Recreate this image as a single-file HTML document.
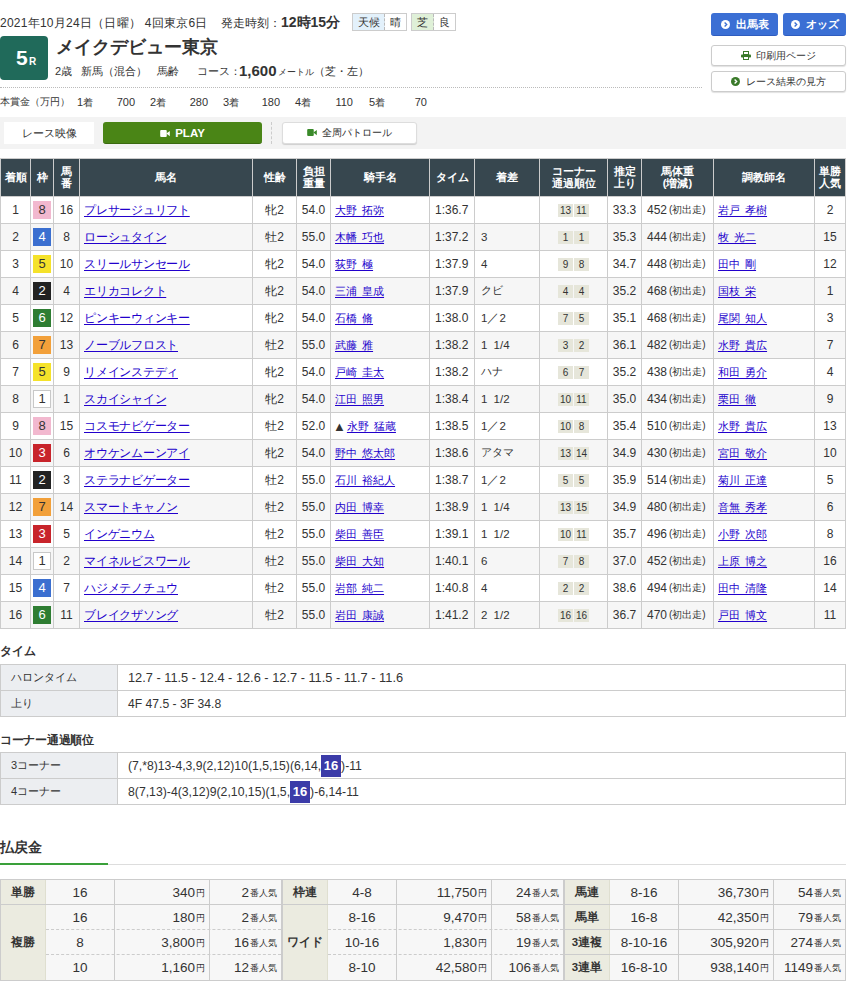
<!DOCTYPE html><html><head><meta charset="utf-8"><style>
*{box-sizing:border-box}
html,body{margin:0;padding:0;background:#fff;width:853px;height:993px;overflow:hidden}
body{font-family:"Liberation Sans",sans-serif;color:#333;position:relative}
.ab{position:absolute;white-space:nowrap}
.c{position:absolute;display:flex;align-items:center;white-space:nowrap;overflow:visible}
.hl{position:absolute;background:#ccc;height:1px}
.vl{position:absolute;background:#ccc;width:1px}
a{color:#2200cc;text-decoration:underline;text-underline-offset:2px}
</style></head><body>

<div class="ab" style="left:0;top:15px;font-size:12px;letter-spacing:0.25px;line-height:16px;color:#333">2021年10月24日（日曜） 4回東京6日</div>
<div class="ab" style="left:221px;top:13px;font-size:12px;line-height:18px;color:#333">発走時刻：<b style="font-size:14px">12時15分</b></div>
<div class="ab" style="left:352px;top:13px;width:55px;height:18px;border:1px solid #ccc;font-size:11px;line-height:16px"><span style="position:absolute;left:0;top:0;width:32px;height:16px;background:#e3f1fb;text-align:center;border-right:1px dashed #bbb">天候</span><span style="position:absolute;left:32px;top:0;width:21px;height:16px;text-align:center">晴</span></div>
<div class="ab" style="left:411px;top:13px;width:45px;height:18px;border:1px solid #ccc;font-size:11px;line-height:16px"><span style="position:absolute;left:0;top:0;width:22px;height:16px;background:#dff0d8;text-align:center;border-right:1px dashed #bbb">芝</span><span style="position:absolute;left:22px;top:0;width:21px;height:16px;text-align:center">良</span></div>
<div class="ab" style="left:0;top:36px;width:48px;height:44px;background:#206a5a;border-radius:4px;color:#fff"><span style="position:absolute;left:16px;top:11px;font-size:21px;line-height:22px;font-weight:bold">5</span><span style="position:absolute;left:29px;top:20px;font-size:10px;line-height:12px;font-weight:bold">R</span></div>
<div class="ab" style="left:56px;top:36px;font-size:18px;line-height:22px;font-weight:bold;color:#333">メイクデビュー東京</div>
<div class="ab" style="left:55px;top:63px;font-size:11px;line-height:16px;color:#333">2歳</div>
<div class="ab" style="left:81px;top:63px;font-size:11px;line-height:16px;color:#333">新馬（混合）</div>
<div class="ab" style="left:157px;top:63px;font-size:11px;line-height:16px;color:#333">馬齢</div>
<div class="ab" style="left:197px;top:63px;font-size:11px;line-height:16px;color:#333">コース：</div>
<div class="ab" style="left:239px;top:62px;font-size:15px;line-height:18px;font-weight:bold;color:#333">1,600</div>
<div class="ab" style="left:278px;top:64px;font-size:9px;line-height:16px;color:#333">メートル</div>
<div class="ab" style="left:314px;top:63px;font-size:11px;line-height:16px;color:#333">（芝・左）</div>
<div class="ab" style="left:0;top:87px;width:702px;height:1px;border-top:1px dotted #bbb"></div>
<div class="ab" style="left:711px;top:13px;width:67px;height:23px;background:#3b6fd4;border-bottom:1px solid #2f5cbf;border-radius:3px;color:#fff;font-size:11px;font-weight:bold;line-height:22px;text-align:center"><svg width="9" height="9" viewBox="0 0 12 12" style="vertical-align:-1px;margin-right:6px"><circle cx="6" cy="6" r="6" fill="#fff"/><path d="M4.8 3.2 L7.6 6 L4.8 8.8" stroke="#3b6fd4" stroke-width="1.8" fill="none"/></svg>出馬表</div>
<div class="ab" style="left:783px;top:13px;width:63px;height:23px;background:#3b6fd4;border-bottom:1px solid #2f5cbf;border-radius:3px;color:#fff;font-size:11px;font-weight:bold;line-height:22px;text-align:center"><svg width="9" height="9" viewBox="0 0 12 12" style="vertical-align:-1px;margin-right:6px"><circle cx="6" cy="6" r="6" fill="#fff"/><path d="M4.8 3.2 L7.6 6 L4.8 8.8" stroke="#3b6fd4" stroke-width="1.8" fill="none"/></svg>オッズ</div>
<div class="ab" style="left:711px;top:45px;width:135px;height:21px;background:#fff;border:1px solid #ccc;border-radius:3px;box-shadow:0 1px 1px rgba(0,0,0,.12);color:#333;font-size:10px;line-height:19px;text-align:center"><svg width="10" height="9" viewBox="0 0 10 9" style="vertical-align:-1px;margin-right:5px"><rect x="2.5" y="0.5" width="5" height="3" fill="none" stroke="#3a7a2a" stroke-width="1"/><rect x="0" y="3.5" width="10" height="3" rx="0.8" fill="#3a7a2a"/><rect x="2.5" y="5.5" width="5" height="3" fill="#fff" stroke="#3a7a2a" stroke-width="1"/></svg>印刷用ページ</div>
<div class="ab" style="left:711px;top:71px;width:135px;height:21px;background:#fff;border:1px solid #ccc;border-radius:3px;box-shadow:0 1px 1px rgba(0,0,0,.12);color:#333;font-size:10px;line-height:19px;text-align:center"><svg width="9" height="9" viewBox="0 0 12 12" style="vertical-align:-1px;margin-right:6px"><circle cx="6" cy="6" r="6" fill="#3a7a2a"/><path d="M4.8 3.2 L7.6 6 L4.8 8.8" stroke="#fff" stroke-width="1.8" fill="none"/></svg>レース結果の見方</div>
<div class="ab" style="left:0;top:94px;font-size:10px;line-height:16px">本賞金（万円）</div>
<div class="ab" style="left:77px;top:94px;font-size:11px;line-height:16px">1<span style="font-size:10px">着</span></div>
<div class="ab" style="left:95px;top:94px;width:40px;text-align:right;font-size:11px;line-height:16px">700</div>
<div class="ab" style="left:150px;top:94px;font-size:11px;line-height:16px">2<span style="font-size:10px">着</span></div>
<div class="ab" style="left:168px;top:94px;width:40px;text-align:right;font-size:11px;line-height:16px">280</div>
<div class="ab" style="left:223px;top:94px;font-size:11px;line-height:16px">3<span style="font-size:10px">着</span></div>
<div class="ab" style="left:240px;top:94px;width:40px;text-align:right;font-size:11px;line-height:16px">180</div>
<div class="ab" style="left:295px;top:94px;font-size:11px;line-height:16px">4<span style="font-size:10px">着</span></div>
<div class="ab" style="left:313px;top:94px;width:40px;text-align:right;font-size:11px;line-height:16px">110</div>
<div class="ab" style="left:369px;top:94px;font-size:11px;line-height:16px">5<span style="font-size:10px">着</span></div>
<div class="ab" style="left:387px;top:94px;width:40px;text-align:right;font-size:11px;line-height:16px">70</div>
<div class="ab" style="left:0;top:117px;width:846px;height:32px;background:#f3f3f3"></div>
<div class="ab" style="left:4px;top:122px;width:90px;height:22px;background:#fff;font-size:11px;line-height:22px;text-align:center;color:#333">レース映像</div>
<div class="ab" style="left:103px;top:122px;width:159px;height:22px;background:#4a8516;border-radius:3px;border-bottom:1px solid #3a6a10;color:#fff;font-size:11.5px;font-weight:bold;line-height:21px;padding-top:1px;text-align:center"><svg width="10" height="7" viewBox="0 0 11 8" style="vertical-align:0px;margin-right:5px"><rect x="0" y="0" width="7.5" height="8" rx="1.2" fill="#fff"/><path d="M7 4 L11 1 L11 7 Z" fill="#fff"/></svg>PLAY</div>
<div class="ab" style="left:271px;top:122px;width:1px;height:22px;border-left:1px dashed #ccc"></div>
<div class="ab" style="left:282px;top:122px;width:135px;height:22px;background:#fff;border:1px solid #ddd;border-radius:3px;box-shadow:0 1px 1px rgba(0,0,0,.15);color:#333;font-size:10px;line-height:19px;text-align:center"><svg width="10" height="7" viewBox="0 0 11 8" style="vertical-align:0px;margin-right:5px"><rect x="0" y="0" width="7.5" height="8" rx="1.2" fill="#3a8a2a"/><path d="M7 4 L11 1 L11 7 Z" fill="#3a8a2a"/></svg>全周パトロール</div>
<div class="ab" style="left:0;top:158px;width:846px;height:38px;background:#37474f"></div>
<div class="ab" style="left:0;top:223px;width:846px;height:27px;background:#f6f6f6"></div>
<div class="ab" style="left:0;top:277px;width:846px;height:27px;background:#f6f6f6"></div>
<div class="ab" style="left:0;top:331px;width:846px;height:27px;background:#f6f6f6"></div>
<div class="ab" style="left:0;top:385px;width:846px;height:27px;background:#f6f6f6"></div>
<div class="ab" style="left:0;top:439px;width:846px;height:27px;background:#f6f6f6"></div>
<div class="ab" style="left:0;top:493px;width:846px;height:27px;background:#f6f6f6"></div>
<div class="ab" style="left:0;top:547px;width:846px;height:27px;background:#f6f6f6"></div>
<div class="ab" style="left:0;top:601px;width:846px;height:27px;background:#f6f6f6"></div>
<div class="hl" style="left:0;top:158px;width:846px"></div>
<div class="hl" style="left:0;top:196px;width:846px"></div>
<div class="hl" style="left:0;top:223px;width:846px"></div>
<div class="hl" style="left:0;top:250px;width:846px"></div>
<div class="hl" style="left:0;top:277px;width:846px"></div>
<div class="hl" style="left:0;top:304px;width:846px"></div>
<div class="hl" style="left:0;top:331px;width:846px"></div>
<div class="hl" style="left:0;top:358px;width:846px"></div>
<div class="hl" style="left:0;top:385px;width:846px"></div>
<div class="hl" style="left:0;top:412px;width:846px"></div>
<div class="hl" style="left:0;top:439px;width:846px"></div>
<div class="hl" style="left:0;top:466px;width:846px"></div>
<div class="hl" style="left:0;top:493px;width:846px"></div>
<div class="hl" style="left:0;top:520px;width:846px"></div>
<div class="hl" style="left:0;top:547px;width:846px"></div>
<div class="hl" style="left:0;top:574px;width:846px"></div>
<div class="hl" style="left:0;top:601px;width:846px"></div>
<div class="hl" style="left:0;top:628px;width:846px"></div>
<div class="vl" style="left:0px;top:158px;height:471px"></div>
<div class="vl" style="left:30px;top:158px;height:471px"></div>
<div class="vl" style="left:53px;top:158px;height:471px"></div>
<div class="vl" style="left:79px;top:158px;height:471px"></div>
<div class="vl" style="left:252px;top:158px;height:471px"></div>
<div class="vl" style="left:296px;top:158px;height:471px"></div>
<div class="vl" style="left:330px;top:158px;height:471px"></div>
<div class="vl" style="left:429px;top:158px;height:471px"></div>
<div class="vl" style="left:474px;top:158px;height:471px"></div>
<div class="vl" style="left:539px;top:158px;height:471px"></div>
<div class="vl" style="left:607px;top:158px;height:471px"></div>
<div class="vl" style="left:641px;top:158px;height:471px"></div>
<div class="vl" style="left:713px;top:158px;height:471px"></div>
<div class="vl" style="left:814px;top:158px;height:471px"></div>
<div class="vl" style="left:845px;top:158px;height:471px"></div>
<div class="c" style="left:1px;top:159px;width:29px;height:37px;justify-content:center;text-align:center;color:#fff;font-weight:bold;font-size:11px;line-height:12px;padding-bottom:2px">着順</div>
<div class="c" style="left:31px;top:159px;width:22px;height:37px;justify-content:center;text-align:center;color:#fff;font-weight:bold;font-size:11px;line-height:12px;padding-bottom:2px">枠</div>
<div class="c" style="left:54px;top:159px;width:25px;height:37px;justify-content:center;text-align:center;color:#fff;font-weight:bold;font-size:11px;line-height:12px;padding-bottom:2px">馬<br>番</div>
<div class="c" style="left:80px;top:159px;width:172px;height:37px;justify-content:center;text-align:center;color:#fff;font-weight:bold;font-size:11px;line-height:12px;padding-bottom:2px">馬名</div>
<div class="c" style="left:253px;top:159px;width:43px;height:37px;justify-content:center;text-align:center;color:#fff;font-weight:bold;font-size:11px;line-height:12px;padding-bottom:2px">性齢</div>
<div class="c" style="left:297px;top:159px;width:33px;height:37px;justify-content:center;text-align:center;color:#fff;font-weight:bold;font-size:11px;line-height:12px;padding-bottom:2px">負担<br>重量</div>
<div class="c" style="left:331px;top:159px;width:98px;height:37px;justify-content:center;text-align:center;color:#fff;font-weight:bold;font-size:11px;line-height:12px;padding-bottom:2px">騎手名</div>
<div class="c" style="left:430px;top:159px;width:44px;height:37px;justify-content:center;text-align:center;color:#fff;font-weight:bold;font-size:11px;line-height:12px;padding-bottom:2px">タイム</div>
<div class="c" style="left:475px;top:159px;width:64px;height:37px;justify-content:center;text-align:center;color:#fff;font-weight:bold;font-size:11px;line-height:12px;padding-bottom:2px">着差</div>
<div class="c" style="left:540px;top:159px;width:67px;height:37px;justify-content:center;text-align:center;color:#fff;font-weight:bold;font-size:11px;line-height:12px;padding-bottom:2px">コーナー<br>通過順位</div>
<div class="c" style="left:608px;top:159px;width:33px;height:37px;justify-content:center;text-align:center;color:#fff;font-weight:bold;font-size:11px;line-height:12px;padding-bottom:2px">推定<br>上り</div>
<div class="c" style="left:642px;top:159px;width:71px;height:37px;justify-content:center;text-align:center;color:#fff;font-weight:bold;font-size:11px;line-height:12px;padding-bottom:2px">馬体重<br>(増減)</div>
<div class="c" style="left:714px;top:159px;width:100px;height:37px;justify-content:center;text-align:center;color:#fff;font-weight:bold;font-size:11px;line-height:12px;padding-bottom:2px">調教師名</div>
<div class="c" style="left:815px;top:159px;width:30px;height:37px;justify-content:center;text-align:center;color:#fff;font-weight:bold;font-size:11px;line-height:12px;padding-bottom:2px">単勝<br>人気</div>
<div class="c" style="left:1px;top:197px;width:29px;height:26px;justify-content:center;padding:0 0px;font-size:12px;">1</div>
<div class="c" style="left:31px;top:197px;width:22px;height:26px;justify-content:center;padding:0 0px;font-size:12px;"><span style="display:block;width:18px;height:18px;background:#f2b8cf;color:#333;text-align:center;line-height:18px;font-size:13px">8</span></div>
<div class="c" style="left:54px;top:197px;width:25px;height:26px;justify-content:center;padding:0 0px;font-size:12px;">16</div>
<div class="c" style="left:80px;top:197px;width:172px;height:26px;justify-content:flex-start;padding:0 4px;font-size:12px;font-size:12px;letter-spacing:-0.25px"><a>プレサージュリフト</a></div>
<div class="c" style="left:253px;top:197px;width:43px;height:26px;justify-content:center;padding:0 0px;font-size:12px;">牝2</div>
<div class="c" style="left:297px;top:197px;width:33px;height:26px;justify-content:center;padding:0 0px;font-size:12px;">54.0</div>
<div class="c" style="left:331px;top:197px;width:98px;height:26px;justify-content:flex-start;padding:0 4px;font-size:12px;font-size:11px;word-spacing:2px"><a>大野 拓弥</a></div>
<div class="c" style="left:430px;top:197px;width:44px;height:26px;justify-content:flex-start;padding:0 5px;font-size:12px;">1:36.7</div>
<div class="c" style="left:475px;top:197px;width:64px;height:26px;justify-content:flex-start;padding:0 6px;font-size:12px;font-size:10.5px"></div>
<div class="c" style="left:540px;top:197px;width:67px;height:26px;justify-content:center;padding:0 0px;font-size:12px;"><span style="display:inline-block;width:15px;height:13px;background:#e6e6da;font-size:10px;line-height:13px;text-align:center;margin:0 .5px">13</span><span style="display:inline-block;width:15px;height:13px;background:#e6e6da;font-size:10px;line-height:13px;text-align:center;margin:0 .5px">11</span></div>
<div class="c" style="left:608px;top:197px;width:33px;height:26px;justify-content:center;padding:0 0px;font-size:12px;">33.3</div>
<div class="c" style="left:642px;top:197px;width:71px;height:26px;justify-content:flex-start;padding:0 5px;font-size:12px;">452<span style="font-size:10px;margin-left:2px">(初出走)</span></div>
<div class="c" style="left:714px;top:197px;width:100px;height:26px;justify-content:flex-start;padding:0 4px;font-size:12px;font-size:11px;word-spacing:2px"><a>岩戸 孝樹</a></div>
<div class="c" style="left:815px;top:197px;width:30px;height:26px;justify-content:center;padding:0 0px;font-size:12px;">2</div>
<div class="c" style="left:1px;top:224px;width:29px;height:26px;justify-content:center;padding:0 0px;font-size:12px;">2</div>
<div class="c" style="left:31px;top:224px;width:22px;height:26px;justify-content:center;padding:0 0px;font-size:12px;"><span style="display:block;width:18px;height:18px;background:#3b6fd0;color:#fff;text-align:center;line-height:18px;font-size:13px">4</span></div>
<div class="c" style="left:54px;top:224px;width:25px;height:26px;justify-content:center;padding:0 0px;font-size:12px;">8</div>
<div class="c" style="left:80px;top:224px;width:172px;height:26px;justify-content:flex-start;padding:0 4px;font-size:12px;font-size:12px;letter-spacing:-0.25px"><a>ローシュタイン</a></div>
<div class="c" style="left:253px;top:224px;width:43px;height:26px;justify-content:center;padding:0 0px;font-size:12px;">牡2</div>
<div class="c" style="left:297px;top:224px;width:33px;height:26px;justify-content:center;padding:0 0px;font-size:12px;">55.0</div>
<div class="c" style="left:331px;top:224px;width:98px;height:26px;justify-content:flex-start;padding:0 4px;font-size:12px;font-size:11px;word-spacing:2px"><a>木幡 巧也</a></div>
<div class="c" style="left:430px;top:224px;width:44px;height:26px;justify-content:flex-start;padding:0 5px;font-size:12px;">1:37.2</div>
<div class="c" style="left:475px;top:224px;width:64px;height:26px;justify-content:flex-start;padding:0 6px;font-size:12px;font-size:11.5px;word-spacing:3px">3</div>
<div class="c" style="left:540px;top:224px;width:67px;height:26px;justify-content:center;padding:0 0px;font-size:12px;"><span style="display:inline-block;width:15px;height:13px;background:#e6e6da;font-size:10px;line-height:13px;text-align:center;margin:0 .5px">1</span><span style="display:inline-block;width:15px;height:13px;background:#e6e6da;font-size:10px;line-height:13px;text-align:center;margin:0 .5px">1</span></div>
<div class="c" style="left:608px;top:224px;width:33px;height:26px;justify-content:center;padding:0 0px;font-size:12px;">35.3</div>
<div class="c" style="left:642px;top:224px;width:71px;height:26px;justify-content:flex-start;padding:0 5px;font-size:12px;">444<span style="font-size:10px;margin-left:2px">(初出走)</span></div>
<div class="c" style="left:714px;top:224px;width:100px;height:26px;justify-content:flex-start;padding:0 4px;font-size:12px;font-size:11px;word-spacing:2px"><a>牧 光二</a></div>
<div class="c" style="left:815px;top:224px;width:30px;height:26px;justify-content:center;padding:0 0px;font-size:12px;">15</div>
<div class="c" style="left:1px;top:251px;width:29px;height:26px;justify-content:center;padding:0 0px;font-size:12px;">3</div>
<div class="c" style="left:31px;top:251px;width:22px;height:26px;justify-content:center;padding:0 0px;font-size:12px;"><span style="display:block;width:18px;height:18px;background:#f5e22a;color:#333;text-align:center;line-height:18px;font-size:13px">5</span></div>
<div class="c" style="left:54px;top:251px;width:25px;height:26px;justify-content:center;padding:0 0px;font-size:12px;">10</div>
<div class="c" style="left:80px;top:251px;width:172px;height:26px;justify-content:flex-start;padding:0 4px;font-size:12px;font-size:12px;letter-spacing:-0.25px"><a>スリールサンセール</a></div>
<div class="c" style="left:253px;top:251px;width:43px;height:26px;justify-content:center;padding:0 0px;font-size:12px;">牝2</div>
<div class="c" style="left:297px;top:251px;width:33px;height:26px;justify-content:center;padding:0 0px;font-size:12px;">54.0</div>
<div class="c" style="left:331px;top:251px;width:98px;height:26px;justify-content:flex-start;padding:0 4px;font-size:12px;font-size:11px;word-spacing:2px"><a>荻野 極</a></div>
<div class="c" style="left:430px;top:251px;width:44px;height:26px;justify-content:flex-start;padding:0 5px;font-size:12px;">1:37.9</div>
<div class="c" style="left:475px;top:251px;width:64px;height:26px;justify-content:flex-start;padding:0 6px;font-size:12px;font-size:11.5px;word-spacing:3px">4</div>
<div class="c" style="left:540px;top:251px;width:67px;height:26px;justify-content:center;padding:0 0px;font-size:12px;"><span style="display:inline-block;width:15px;height:13px;background:#e6e6da;font-size:10px;line-height:13px;text-align:center;margin:0 .5px">9</span><span style="display:inline-block;width:15px;height:13px;background:#e6e6da;font-size:10px;line-height:13px;text-align:center;margin:0 .5px">8</span></div>
<div class="c" style="left:608px;top:251px;width:33px;height:26px;justify-content:center;padding:0 0px;font-size:12px;">34.7</div>
<div class="c" style="left:642px;top:251px;width:71px;height:26px;justify-content:flex-start;padding:0 5px;font-size:12px;">448<span style="font-size:10px;margin-left:2px">(初出走)</span></div>
<div class="c" style="left:714px;top:251px;width:100px;height:26px;justify-content:flex-start;padding:0 4px;font-size:12px;font-size:11px;word-spacing:2px"><a>田中 剛</a></div>
<div class="c" style="left:815px;top:251px;width:30px;height:26px;justify-content:center;padding:0 0px;font-size:12px;">12</div>
<div class="c" style="left:1px;top:278px;width:29px;height:26px;justify-content:center;padding:0 0px;font-size:12px;">4</div>
<div class="c" style="left:31px;top:278px;width:22px;height:26px;justify-content:center;padding:0 0px;font-size:12px;"><span style="display:block;width:18px;height:18px;background:#222;color:#fff;text-align:center;line-height:18px;font-size:13px">2</span></div>
<div class="c" style="left:54px;top:278px;width:25px;height:26px;justify-content:center;padding:0 0px;font-size:12px;">4</div>
<div class="c" style="left:80px;top:278px;width:172px;height:26px;justify-content:flex-start;padding:0 4px;font-size:12px;font-size:12px;letter-spacing:-0.25px"><a>エリカコレクト</a></div>
<div class="c" style="left:253px;top:278px;width:43px;height:26px;justify-content:center;padding:0 0px;font-size:12px;">牝2</div>
<div class="c" style="left:297px;top:278px;width:33px;height:26px;justify-content:center;padding:0 0px;font-size:12px;">54.0</div>
<div class="c" style="left:331px;top:278px;width:98px;height:26px;justify-content:flex-start;padding:0 4px;font-size:12px;font-size:11px;word-spacing:2px"><a>三浦 皇成</a></div>
<div class="c" style="left:430px;top:278px;width:44px;height:26px;justify-content:flex-start;padding:0 5px;font-size:12px;">1:37.9</div>
<div class="c" style="left:475px;top:278px;width:64px;height:26px;justify-content:flex-start;padding:0 6px;font-size:12px;font-size:10.5px">クビ</div>
<div class="c" style="left:540px;top:278px;width:67px;height:26px;justify-content:center;padding:0 0px;font-size:12px;"><span style="display:inline-block;width:15px;height:13px;background:#e6e6da;font-size:10px;line-height:13px;text-align:center;margin:0 .5px">4</span><span style="display:inline-block;width:15px;height:13px;background:#e6e6da;font-size:10px;line-height:13px;text-align:center;margin:0 .5px">4</span></div>
<div class="c" style="left:608px;top:278px;width:33px;height:26px;justify-content:center;padding:0 0px;font-size:12px;">35.2</div>
<div class="c" style="left:642px;top:278px;width:71px;height:26px;justify-content:flex-start;padding:0 5px;font-size:12px;">468<span style="font-size:10px;margin-left:2px">(初出走)</span></div>
<div class="c" style="left:714px;top:278px;width:100px;height:26px;justify-content:flex-start;padding:0 4px;font-size:12px;font-size:11px;word-spacing:2px"><a>国枝 栄</a></div>
<div class="c" style="left:815px;top:278px;width:30px;height:26px;justify-content:center;padding:0 0px;font-size:12px;">1</div>
<div class="c" style="left:1px;top:305px;width:29px;height:26px;justify-content:center;padding:0 0px;font-size:12px;">5</div>
<div class="c" style="left:31px;top:305px;width:22px;height:26px;justify-content:center;padding:0 0px;font-size:12px;"><span style="display:block;width:18px;height:18px;background:#2e7d32;color:#fff;text-align:center;line-height:18px;font-size:13px">6</span></div>
<div class="c" style="left:54px;top:305px;width:25px;height:26px;justify-content:center;padding:0 0px;font-size:12px;">12</div>
<div class="c" style="left:80px;top:305px;width:172px;height:26px;justify-content:flex-start;padding:0 4px;font-size:12px;font-size:12px;letter-spacing:-0.25px"><a>ピンキーウィンキー</a></div>
<div class="c" style="left:253px;top:305px;width:43px;height:26px;justify-content:center;padding:0 0px;font-size:12px;">牝2</div>
<div class="c" style="left:297px;top:305px;width:33px;height:26px;justify-content:center;padding:0 0px;font-size:12px;">54.0</div>
<div class="c" style="left:331px;top:305px;width:98px;height:26px;justify-content:flex-start;padding:0 4px;font-size:12px;font-size:11px;word-spacing:2px"><a>石橋 脩</a></div>
<div class="c" style="left:430px;top:305px;width:44px;height:26px;justify-content:flex-start;padding:0 5px;font-size:12px;">1:38.0</div>
<div class="c" style="left:475px;top:305px;width:64px;height:26px;justify-content:flex-start;padding:0 6px;font-size:12px;font-size:11.5px;word-spacing:3px">1<span style="font-size:12px">／</span>2</div>
<div class="c" style="left:540px;top:305px;width:67px;height:26px;justify-content:center;padding:0 0px;font-size:12px;"><span style="display:inline-block;width:15px;height:13px;background:#e6e6da;font-size:10px;line-height:13px;text-align:center;margin:0 .5px">7</span><span style="display:inline-block;width:15px;height:13px;background:#e6e6da;font-size:10px;line-height:13px;text-align:center;margin:0 .5px">5</span></div>
<div class="c" style="left:608px;top:305px;width:33px;height:26px;justify-content:center;padding:0 0px;font-size:12px;">35.1</div>
<div class="c" style="left:642px;top:305px;width:71px;height:26px;justify-content:flex-start;padding:0 5px;font-size:12px;">468<span style="font-size:10px;margin-left:2px">(初出走)</span></div>
<div class="c" style="left:714px;top:305px;width:100px;height:26px;justify-content:flex-start;padding:0 4px;font-size:12px;font-size:11px;word-spacing:2px"><a>尾関 知人</a></div>
<div class="c" style="left:815px;top:305px;width:30px;height:26px;justify-content:center;padding:0 0px;font-size:12px;">3</div>
<div class="c" style="left:1px;top:332px;width:29px;height:26px;justify-content:center;padding:0 0px;font-size:12px;">6</div>
<div class="c" style="left:31px;top:332px;width:22px;height:26px;justify-content:center;padding:0 0px;font-size:12px;"><span style="display:block;width:18px;height:18px;background:#f2a03a;color:#333;text-align:center;line-height:18px;font-size:13px">7</span></div>
<div class="c" style="left:54px;top:332px;width:25px;height:26px;justify-content:center;padding:0 0px;font-size:12px;">13</div>
<div class="c" style="left:80px;top:332px;width:172px;height:26px;justify-content:flex-start;padding:0 4px;font-size:12px;font-size:12px;letter-spacing:-0.25px"><a>ノーブルフロスト</a></div>
<div class="c" style="left:253px;top:332px;width:43px;height:26px;justify-content:center;padding:0 0px;font-size:12px;">牡2</div>
<div class="c" style="left:297px;top:332px;width:33px;height:26px;justify-content:center;padding:0 0px;font-size:12px;">55.0</div>
<div class="c" style="left:331px;top:332px;width:98px;height:26px;justify-content:flex-start;padding:0 4px;font-size:12px;font-size:11px;word-spacing:2px"><a>武藤 雅</a></div>
<div class="c" style="left:430px;top:332px;width:44px;height:26px;justify-content:flex-start;padding:0 5px;font-size:12px;">1:38.2</div>
<div class="c" style="left:475px;top:332px;width:64px;height:26px;justify-content:flex-start;padding:0 6px;font-size:12px;font-size:11.5px;word-spacing:3px">1 1/4</div>
<div class="c" style="left:540px;top:332px;width:67px;height:26px;justify-content:center;padding:0 0px;font-size:12px;"><span style="display:inline-block;width:15px;height:13px;background:#e6e6da;font-size:10px;line-height:13px;text-align:center;margin:0 .5px">3</span><span style="display:inline-block;width:15px;height:13px;background:#e6e6da;font-size:10px;line-height:13px;text-align:center;margin:0 .5px">2</span></div>
<div class="c" style="left:608px;top:332px;width:33px;height:26px;justify-content:center;padding:0 0px;font-size:12px;">36.1</div>
<div class="c" style="left:642px;top:332px;width:71px;height:26px;justify-content:flex-start;padding:0 5px;font-size:12px;">482<span style="font-size:10px;margin-left:2px">(初出走)</span></div>
<div class="c" style="left:714px;top:332px;width:100px;height:26px;justify-content:flex-start;padding:0 4px;font-size:12px;font-size:11px;word-spacing:2px"><a>水野 貴広</a></div>
<div class="c" style="left:815px;top:332px;width:30px;height:26px;justify-content:center;padding:0 0px;font-size:12px;">7</div>
<div class="c" style="left:1px;top:359px;width:29px;height:26px;justify-content:center;padding:0 0px;font-size:12px;">7</div>
<div class="c" style="left:31px;top:359px;width:22px;height:26px;justify-content:center;padding:0 0px;font-size:12px;"><span style="display:block;width:18px;height:18px;background:#f5e22a;color:#333;text-align:center;line-height:18px;font-size:13px">5</span></div>
<div class="c" style="left:54px;top:359px;width:25px;height:26px;justify-content:center;padding:0 0px;font-size:12px;">9</div>
<div class="c" style="left:80px;top:359px;width:172px;height:26px;justify-content:flex-start;padding:0 4px;font-size:12px;font-size:12px;letter-spacing:-0.25px"><a>リメインステディ</a></div>
<div class="c" style="left:253px;top:359px;width:43px;height:26px;justify-content:center;padding:0 0px;font-size:12px;">牝2</div>
<div class="c" style="left:297px;top:359px;width:33px;height:26px;justify-content:center;padding:0 0px;font-size:12px;">54.0</div>
<div class="c" style="left:331px;top:359px;width:98px;height:26px;justify-content:flex-start;padding:0 4px;font-size:12px;font-size:11px;word-spacing:2px"><a>戸崎 圭太</a></div>
<div class="c" style="left:430px;top:359px;width:44px;height:26px;justify-content:flex-start;padding:0 5px;font-size:12px;">1:38.2</div>
<div class="c" style="left:475px;top:359px;width:64px;height:26px;justify-content:flex-start;padding:0 6px;font-size:12px;font-size:10.5px">ハナ</div>
<div class="c" style="left:540px;top:359px;width:67px;height:26px;justify-content:center;padding:0 0px;font-size:12px;"><span style="display:inline-block;width:15px;height:13px;background:#e6e6da;font-size:10px;line-height:13px;text-align:center;margin:0 .5px">6</span><span style="display:inline-block;width:15px;height:13px;background:#e6e6da;font-size:10px;line-height:13px;text-align:center;margin:0 .5px">7</span></div>
<div class="c" style="left:608px;top:359px;width:33px;height:26px;justify-content:center;padding:0 0px;font-size:12px;">35.2</div>
<div class="c" style="left:642px;top:359px;width:71px;height:26px;justify-content:flex-start;padding:0 5px;font-size:12px;">438<span style="font-size:10px;margin-left:2px">(初出走)</span></div>
<div class="c" style="left:714px;top:359px;width:100px;height:26px;justify-content:flex-start;padding:0 4px;font-size:12px;font-size:11px;word-spacing:2px"><a>和田 勇介</a></div>
<div class="c" style="left:815px;top:359px;width:30px;height:26px;justify-content:center;padding:0 0px;font-size:12px;">4</div>
<div class="c" style="left:1px;top:386px;width:29px;height:26px;justify-content:center;padding:0 0px;font-size:12px;">8</div>
<div class="c" style="left:31px;top:386px;width:22px;height:26px;justify-content:center;padding:0 0px;font-size:12px;"><span style="display:block;width:18px;height:18px;background:#fff;color:#333;border:1px solid #c8c8c8;text-align:center;line-height:16px;font-size:13px">1</span></div>
<div class="c" style="left:54px;top:386px;width:25px;height:26px;justify-content:center;padding:0 0px;font-size:12px;">1</div>
<div class="c" style="left:80px;top:386px;width:172px;height:26px;justify-content:flex-start;padding:0 4px;font-size:12px;font-size:12px;letter-spacing:-0.25px"><a>スカイシャイン</a></div>
<div class="c" style="left:253px;top:386px;width:43px;height:26px;justify-content:center;padding:0 0px;font-size:12px;">牝2</div>
<div class="c" style="left:297px;top:386px;width:33px;height:26px;justify-content:center;padding:0 0px;font-size:12px;">54.0</div>
<div class="c" style="left:331px;top:386px;width:98px;height:26px;justify-content:flex-start;padding:0 4px;font-size:12px;font-size:11px;word-spacing:2px"><a>江田 照男</a></div>
<div class="c" style="left:430px;top:386px;width:44px;height:26px;justify-content:flex-start;padding:0 5px;font-size:12px;">1:38.4</div>
<div class="c" style="left:475px;top:386px;width:64px;height:26px;justify-content:flex-start;padding:0 6px;font-size:12px;font-size:11.5px;word-spacing:3px">1 1/2</div>
<div class="c" style="left:540px;top:386px;width:67px;height:26px;justify-content:center;padding:0 0px;font-size:12px;"><span style="display:inline-block;width:15px;height:13px;background:#e6e6da;font-size:10px;line-height:13px;text-align:center;margin:0 .5px">10</span><span style="display:inline-block;width:15px;height:13px;background:#e6e6da;font-size:10px;line-height:13px;text-align:center;margin:0 .5px">11</span></div>
<div class="c" style="left:608px;top:386px;width:33px;height:26px;justify-content:center;padding:0 0px;font-size:12px;">35.0</div>
<div class="c" style="left:642px;top:386px;width:71px;height:26px;justify-content:flex-start;padding:0 5px;font-size:12px;">434<span style="font-size:10px;margin-left:2px">(初出走)</span></div>
<div class="c" style="left:714px;top:386px;width:100px;height:26px;justify-content:flex-start;padding:0 4px;font-size:12px;font-size:11px;word-spacing:2px"><a>栗田 徹</a></div>
<div class="c" style="left:815px;top:386px;width:30px;height:26px;justify-content:center;padding:0 0px;font-size:12px;">9</div>
<div class="c" style="left:1px;top:413px;width:29px;height:26px;justify-content:center;padding:0 0px;font-size:12px;">9</div>
<div class="c" style="left:31px;top:413px;width:22px;height:26px;justify-content:center;padding:0 0px;font-size:12px;"><span style="display:block;width:18px;height:18px;background:#f2b8cf;color:#333;text-align:center;line-height:18px;font-size:13px">8</span></div>
<div class="c" style="left:54px;top:413px;width:25px;height:26px;justify-content:center;padding:0 0px;font-size:12px;">15</div>
<div class="c" style="left:80px;top:413px;width:172px;height:26px;justify-content:flex-start;padding:0 4px;font-size:12px;font-size:12px;letter-spacing:-0.25px"><a>コスモナビゲーター</a></div>
<div class="c" style="left:253px;top:413px;width:43px;height:26px;justify-content:center;padding:0 0px;font-size:12px;">牡2</div>
<div class="c" style="left:297px;top:413px;width:33px;height:26px;justify-content:center;padding:0 0px;font-size:12px;">52.0</div>
<div class="c" style="left:331px;top:413px;width:98px;height:26px;justify-content:flex-start;padding:0 4px;font-size:12px;font-size:11px;word-spacing:2px"><span style="font-size:13px;margin-left:-2px;margin-right:1px">▲</span><a>永野 猛蔵</a></div>
<div class="c" style="left:430px;top:413px;width:44px;height:26px;justify-content:flex-start;padding:0 5px;font-size:12px;">1:38.5</div>
<div class="c" style="left:475px;top:413px;width:64px;height:26px;justify-content:flex-start;padding:0 6px;font-size:12px;font-size:11.5px;word-spacing:3px">1<span style="font-size:12px">／</span>2</div>
<div class="c" style="left:540px;top:413px;width:67px;height:26px;justify-content:center;padding:0 0px;font-size:12px;"><span style="display:inline-block;width:15px;height:13px;background:#e6e6da;font-size:10px;line-height:13px;text-align:center;margin:0 .5px">10</span><span style="display:inline-block;width:15px;height:13px;background:#e6e6da;font-size:10px;line-height:13px;text-align:center;margin:0 .5px">8</span></div>
<div class="c" style="left:608px;top:413px;width:33px;height:26px;justify-content:center;padding:0 0px;font-size:12px;">35.4</div>
<div class="c" style="left:642px;top:413px;width:71px;height:26px;justify-content:flex-start;padding:0 5px;font-size:12px;">510<span style="font-size:10px;margin-left:2px">(初出走)</span></div>
<div class="c" style="left:714px;top:413px;width:100px;height:26px;justify-content:flex-start;padding:0 4px;font-size:12px;font-size:11px;word-spacing:2px"><a>水野 貴広</a></div>
<div class="c" style="left:815px;top:413px;width:30px;height:26px;justify-content:center;padding:0 0px;font-size:12px;">13</div>
<div class="c" style="left:1px;top:440px;width:29px;height:26px;justify-content:center;padding:0 0px;font-size:12px;">10</div>
<div class="c" style="left:31px;top:440px;width:22px;height:26px;justify-content:center;padding:0 0px;font-size:12px;"><span style="display:block;width:18px;height:18px;background:#c8242b;color:#fff;text-align:center;line-height:18px;font-size:13px">3</span></div>
<div class="c" style="left:54px;top:440px;width:25px;height:26px;justify-content:center;padding:0 0px;font-size:12px;">6</div>
<div class="c" style="left:80px;top:440px;width:172px;height:26px;justify-content:flex-start;padding:0 4px;font-size:12px;font-size:12px;letter-spacing:-0.25px"><a>オウケンムーンアイ</a></div>
<div class="c" style="left:253px;top:440px;width:43px;height:26px;justify-content:center;padding:0 0px;font-size:12px;">牝2</div>
<div class="c" style="left:297px;top:440px;width:33px;height:26px;justify-content:center;padding:0 0px;font-size:12px;">54.0</div>
<div class="c" style="left:331px;top:440px;width:98px;height:26px;justify-content:flex-start;padding:0 4px;font-size:12px;font-size:11px;word-spacing:2px"><a>野中 悠太郎</a></div>
<div class="c" style="left:430px;top:440px;width:44px;height:26px;justify-content:flex-start;padding:0 5px;font-size:12px;">1:38.6</div>
<div class="c" style="left:475px;top:440px;width:64px;height:26px;justify-content:flex-start;padding:0 6px;font-size:12px;font-size:10.5px">アタマ</div>
<div class="c" style="left:540px;top:440px;width:67px;height:26px;justify-content:center;padding:0 0px;font-size:12px;"><span style="display:inline-block;width:15px;height:13px;background:#e6e6da;font-size:10px;line-height:13px;text-align:center;margin:0 .5px">13</span><span style="display:inline-block;width:15px;height:13px;background:#e6e6da;font-size:10px;line-height:13px;text-align:center;margin:0 .5px">14</span></div>
<div class="c" style="left:608px;top:440px;width:33px;height:26px;justify-content:center;padding:0 0px;font-size:12px;">34.9</div>
<div class="c" style="left:642px;top:440px;width:71px;height:26px;justify-content:flex-start;padding:0 5px;font-size:12px;">430<span style="font-size:10px;margin-left:2px">(初出走)</span></div>
<div class="c" style="left:714px;top:440px;width:100px;height:26px;justify-content:flex-start;padding:0 4px;font-size:12px;font-size:11px;word-spacing:2px"><a>宮田 敬介</a></div>
<div class="c" style="left:815px;top:440px;width:30px;height:26px;justify-content:center;padding:0 0px;font-size:12px;">10</div>
<div class="c" style="left:1px;top:467px;width:29px;height:26px;justify-content:center;padding:0 0px;font-size:12px;">11</div>
<div class="c" style="left:31px;top:467px;width:22px;height:26px;justify-content:center;padding:0 0px;font-size:12px;"><span style="display:block;width:18px;height:18px;background:#222;color:#fff;text-align:center;line-height:18px;font-size:13px">2</span></div>
<div class="c" style="left:54px;top:467px;width:25px;height:26px;justify-content:center;padding:0 0px;font-size:12px;">3</div>
<div class="c" style="left:80px;top:467px;width:172px;height:26px;justify-content:flex-start;padding:0 4px;font-size:12px;font-size:12px;letter-spacing:-0.25px"><a>ステラナビゲーター</a></div>
<div class="c" style="left:253px;top:467px;width:43px;height:26px;justify-content:center;padding:0 0px;font-size:12px;">牡2</div>
<div class="c" style="left:297px;top:467px;width:33px;height:26px;justify-content:center;padding:0 0px;font-size:12px;">55.0</div>
<div class="c" style="left:331px;top:467px;width:98px;height:26px;justify-content:flex-start;padding:0 4px;font-size:12px;font-size:11px;word-spacing:2px"><a>石川 裕紀人</a></div>
<div class="c" style="left:430px;top:467px;width:44px;height:26px;justify-content:flex-start;padding:0 5px;font-size:12px;">1:38.7</div>
<div class="c" style="left:475px;top:467px;width:64px;height:26px;justify-content:flex-start;padding:0 6px;font-size:12px;font-size:11.5px;word-spacing:3px">1<span style="font-size:12px">／</span>2</div>
<div class="c" style="left:540px;top:467px;width:67px;height:26px;justify-content:center;padding:0 0px;font-size:12px;"><span style="display:inline-block;width:15px;height:13px;background:#e6e6da;font-size:10px;line-height:13px;text-align:center;margin:0 .5px">5</span><span style="display:inline-block;width:15px;height:13px;background:#e6e6da;font-size:10px;line-height:13px;text-align:center;margin:0 .5px">5</span></div>
<div class="c" style="left:608px;top:467px;width:33px;height:26px;justify-content:center;padding:0 0px;font-size:12px;">35.9</div>
<div class="c" style="left:642px;top:467px;width:71px;height:26px;justify-content:flex-start;padding:0 5px;font-size:12px;">514<span style="font-size:10px;margin-left:2px">(初出走)</span></div>
<div class="c" style="left:714px;top:467px;width:100px;height:26px;justify-content:flex-start;padding:0 4px;font-size:12px;font-size:11px;word-spacing:2px"><a>菊川 正達</a></div>
<div class="c" style="left:815px;top:467px;width:30px;height:26px;justify-content:center;padding:0 0px;font-size:12px;">5</div>
<div class="c" style="left:1px;top:494px;width:29px;height:26px;justify-content:center;padding:0 0px;font-size:12px;">12</div>
<div class="c" style="left:31px;top:494px;width:22px;height:26px;justify-content:center;padding:0 0px;font-size:12px;"><span style="display:block;width:18px;height:18px;background:#f2a03a;color:#333;text-align:center;line-height:18px;font-size:13px">7</span></div>
<div class="c" style="left:54px;top:494px;width:25px;height:26px;justify-content:center;padding:0 0px;font-size:12px;">14</div>
<div class="c" style="left:80px;top:494px;width:172px;height:26px;justify-content:flex-start;padding:0 4px;font-size:12px;font-size:12px;letter-spacing:-0.25px"><a>スマートキャノン</a></div>
<div class="c" style="left:253px;top:494px;width:43px;height:26px;justify-content:center;padding:0 0px;font-size:12px;">牡2</div>
<div class="c" style="left:297px;top:494px;width:33px;height:26px;justify-content:center;padding:0 0px;font-size:12px;">55.0</div>
<div class="c" style="left:331px;top:494px;width:98px;height:26px;justify-content:flex-start;padding:0 4px;font-size:12px;font-size:11px;word-spacing:2px"><a>内田 博幸</a></div>
<div class="c" style="left:430px;top:494px;width:44px;height:26px;justify-content:flex-start;padding:0 5px;font-size:12px;">1:38.9</div>
<div class="c" style="left:475px;top:494px;width:64px;height:26px;justify-content:flex-start;padding:0 6px;font-size:12px;font-size:11.5px;word-spacing:3px">1 1/4</div>
<div class="c" style="left:540px;top:494px;width:67px;height:26px;justify-content:center;padding:0 0px;font-size:12px;"><span style="display:inline-block;width:15px;height:13px;background:#e6e6da;font-size:10px;line-height:13px;text-align:center;margin:0 .5px">13</span><span style="display:inline-block;width:15px;height:13px;background:#e6e6da;font-size:10px;line-height:13px;text-align:center;margin:0 .5px">15</span></div>
<div class="c" style="left:608px;top:494px;width:33px;height:26px;justify-content:center;padding:0 0px;font-size:12px;">34.9</div>
<div class="c" style="left:642px;top:494px;width:71px;height:26px;justify-content:flex-start;padding:0 5px;font-size:12px;">480<span style="font-size:10px;margin-left:2px">(初出走)</span></div>
<div class="c" style="left:714px;top:494px;width:100px;height:26px;justify-content:flex-start;padding:0 4px;font-size:12px;font-size:11px;word-spacing:2px"><a>音無 秀孝</a></div>
<div class="c" style="left:815px;top:494px;width:30px;height:26px;justify-content:center;padding:0 0px;font-size:12px;">6</div>
<div class="c" style="left:1px;top:521px;width:29px;height:26px;justify-content:center;padding:0 0px;font-size:12px;">13</div>
<div class="c" style="left:31px;top:521px;width:22px;height:26px;justify-content:center;padding:0 0px;font-size:12px;"><span style="display:block;width:18px;height:18px;background:#c8242b;color:#fff;text-align:center;line-height:18px;font-size:13px">3</span></div>
<div class="c" style="left:54px;top:521px;width:25px;height:26px;justify-content:center;padding:0 0px;font-size:12px;">5</div>
<div class="c" style="left:80px;top:521px;width:172px;height:26px;justify-content:flex-start;padding:0 4px;font-size:12px;font-size:12px;letter-spacing:-0.25px"><a>インゲニウム</a></div>
<div class="c" style="left:253px;top:521px;width:43px;height:26px;justify-content:center;padding:0 0px;font-size:12px;">牡2</div>
<div class="c" style="left:297px;top:521px;width:33px;height:26px;justify-content:center;padding:0 0px;font-size:12px;">55.0</div>
<div class="c" style="left:331px;top:521px;width:98px;height:26px;justify-content:flex-start;padding:0 4px;font-size:12px;font-size:11px;word-spacing:2px"><a>柴田 善臣</a></div>
<div class="c" style="left:430px;top:521px;width:44px;height:26px;justify-content:flex-start;padding:0 5px;font-size:12px;">1:39.1</div>
<div class="c" style="left:475px;top:521px;width:64px;height:26px;justify-content:flex-start;padding:0 6px;font-size:12px;font-size:11.5px;word-spacing:3px">1 1/2</div>
<div class="c" style="left:540px;top:521px;width:67px;height:26px;justify-content:center;padding:0 0px;font-size:12px;"><span style="display:inline-block;width:15px;height:13px;background:#e6e6da;font-size:10px;line-height:13px;text-align:center;margin:0 .5px">10</span><span style="display:inline-block;width:15px;height:13px;background:#e6e6da;font-size:10px;line-height:13px;text-align:center;margin:0 .5px">11</span></div>
<div class="c" style="left:608px;top:521px;width:33px;height:26px;justify-content:center;padding:0 0px;font-size:12px;">35.7</div>
<div class="c" style="left:642px;top:521px;width:71px;height:26px;justify-content:flex-start;padding:0 5px;font-size:12px;">496<span style="font-size:10px;margin-left:2px">(初出走)</span></div>
<div class="c" style="left:714px;top:521px;width:100px;height:26px;justify-content:flex-start;padding:0 4px;font-size:12px;font-size:11px;word-spacing:2px"><a>小野 次郎</a></div>
<div class="c" style="left:815px;top:521px;width:30px;height:26px;justify-content:center;padding:0 0px;font-size:12px;">8</div>
<div class="c" style="left:1px;top:548px;width:29px;height:26px;justify-content:center;padding:0 0px;font-size:12px;">14</div>
<div class="c" style="left:31px;top:548px;width:22px;height:26px;justify-content:center;padding:0 0px;font-size:12px;"><span style="display:block;width:18px;height:18px;background:#fff;color:#333;border:1px solid #c8c8c8;text-align:center;line-height:16px;font-size:13px">1</span></div>
<div class="c" style="left:54px;top:548px;width:25px;height:26px;justify-content:center;padding:0 0px;font-size:12px;">2</div>
<div class="c" style="left:80px;top:548px;width:172px;height:26px;justify-content:flex-start;padding:0 4px;font-size:12px;font-size:12px;letter-spacing:-0.25px"><a>マイネルビスワール</a></div>
<div class="c" style="left:253px;top:548px;width:43px;height:26px;justify-content:center;padding:0 0px;font-size:12px;">牡2</div>
<div class="c" style="left:297px;top:548px;width:33px;height:26px;justify-content:center;padding:0 0px;font-size:12px;">55.0</div>
<div class="c" style="left:331px;top:548px;width:98px;height:26px;justify-content:flex-start;padding:0 4px;font-size:12px;font-size:11px;word-spacing:2px"><a>柴田 大知</a></div>
<div class="c" style="left:430px;top:548px;width:44px;height:26px;justify-content:flex-start;padding:0 5px;font-size:12px;">1:40.1</div>
<div class="c" style="left:475px;top:548px;width:64px;height:26px;justify-content:flex-start;padding:0 6px;font-size:12px;font-size:11.5px;word-spacing:3px">6</div>
<div class="c" style="left:540px;top:548px;width:67px;height:26px;justify-content:center;padding:0 0px;font-size:12px;"><span style="display:inline-block;width:15px;height:13px;background:#e6e6da;font-size:10px;line-height:13px;text-align:center;margin:0 .5px">7</span><span style="display:inline-block;width:15px;height:13px;background:#e6e6da;font-size:10px;line-height:13px;text-align:center;margin:0 .5px">8</span></div>
<div class="c" style="left:608px;top:548px;width:33px;height:26px;justify-content:center;padding:0 0px;font-size:12px;">37.0</div>
<div class="c" style="left:642px;top:548px;width:71px;height:26px;justify-content:flex-start;padding:0 5px;font-size:12px;">452<span style="font-size:10px;margin-left:2px">(初出走)</span></div>
<div class="c" style="left:714px;top:548px;width:100px;height:26px;justify-content:flex-start;padding:0 4px;font-size:12px;font-size:11px;word-spacing:2px"><a>上原 博之</a></div>
<div class="c" style="left:815px;top:548px;width:30px;height:26px;justify-content:center;padding:0 0px;font-size:12px;">16</div>
<div class="c" style="left:1px;top:575px;width:29px;height:26px;justify-content:center;padding:0 0px;font-size:12px;">15</div>
<div class="c" style="left:31px;top:575px;width:22px;height:26px;justify-content:center;padding:0 0px;font-size:12px;"><span style="display:block;width:18px;height:18px;background:#3b6fd0;color:#fff;text-align:center;line-height:18px;font-size:13px">4</span></div>
<div class="c" style="left:54px;top:575px;width:25px;height:26px;justify-content:center;padding:0 0px;font-size:12px;">7</div>
<div class="c" style="left:80px;top:575px;width:172px;height:26px;justify-content:flex-start;padding:0 4px;font-size:12px;font-size:12px;letter-spacing:-0.25px"><a>ハジメテノチュウ</a></div>
<div class="c" style="left:253px;top:575px;width:43px;height:26px;justify-content:center;padding:0 0px;font-size:12px;">牡2</div>
<div class="c" style="left:297px;top:575px;width:33px;height:26px;justify-content:center;padding:0 0px;font-size:12px;">55.0</div>
<div class="c" style="left:331px;top:575px;width:98px;height:26px;justify-content:flex-start;padding:0 4px;font-size:12px;font-size:11px;word-spacing:2px"><a>岩部 純二</a></div>
<div class="c" style="left:430px;top:575px;width:44px;height:26px;justify-content:flex-start;padding:0 5px;font-size:12px;">1:40.8</div>
<div class="c" style="left:475px;top:575px;width:64px;height:26px;justify-content:flex-start;padding:0 6px;font-size:12px;font-size:11.5px;word-spacing:3px">4</div>
<div class="c" style="left:540px;top:575px;width:67px;height:26px;justify-content:center;padding:0 0px;font-size:12px;"><span style="display:inline-block;width:15px;height:13px;background:#e6e6da;font-size:10px;line-height:13px;text-align:center;margin:0 .5px">2</span><span style="display:inline-block;width:15px;height:13px;background:#e6e6da;font-size:10px;line-height:13px;text-align:center;margin:0 .5px">2</span></div>
<div class="c" style="left:608px;top:575px;width:33px;height:26px;justify-content:center;padding:0 0px;font-size:12px;">38.6</div>
<div class="c" style="left:642px;top:575px;width:71px;height:26px;justify-content:flex-start;padding:0 5px;font-size:12px;">494<span style="font-size:10px;margin-left:2px">(初出走)</span></div>
<div class="c" style="left:714px;top:575px;width:100px;height:26px;justify-content:flex-start;padding:0 4px;font-size:12px;font-size:11px;word-spacing:2px"><a>田中 清隆</a></div>
<div class="c" style="left:815px;top:575px;width:30px;height:26px;justify-content:center;padding:0 0px;font-size:12px;">14</div>
<div class="c" style="left:1px;top:602px;width:29px;height:26px;justify-content:center;padding:0 0px;font-size:12px;">16</div>
<div class="c" style="left:31px;top:602px;width:22px;height:26px;justify-content:center;padding:0 0px;font-size:12px;"><span style="display:block;width:18px;height:18px;background:#2e7d32;color:#fff;text-align:center;line-height:18px;font-size:13px">6</span></div>
<div class="c" style="left:54px;top:602px;width:25px;height:26px;justify-content:center;padding:0 0px;font-size:12px;">11</div>
<div class="c" style="left:80px;top:602px;width:172px;height:26px;justify-content:flex-start;padding:0 4px;font-size:12px;font-size:12px;letter-spacing:-0.25px"><a>ブレイクザソング</a></div>
<div class="c" style="left:253px;top:602px;width:43px;height:26px;justify-content:center;padding:0 0px;font-size:12px;">牡2</div>
<div class="c" style="left:297px;top:602px;width:33px;height:26px;justify-content:center;padding:0 0px;font-size:12px;">55.0</div>
<div class="c" style="left:331px;top:602px;width:98px;height:26px;justify-content:flex-start;padding:0 4px;font-size:12px;font-size:11px;word-spacing:2px"><a>岩田 康誠</a></div>
<div class="c" style="left:430px;top:602px;width:44px;height:26px;justify-content:flex-start;padding:0 5px;font-size:12px;">1:41.2</div>
<div class="c" style="left:475px;top:602px;width:64px;height:26px;justify-content:flex-start;padding:0 6px;font-size:12px;font-size:11.5px;word-spacing:3px">2 1/2</div>
<div class="c" style="left:540px;top:602px;width:67px;height:26px;justify-content:center;padding:0 0px;font-size:12px;"><span style="display:inline-block;width:15px;height:13px;background:#e6e6da;font-size:10px;line-height:13px;text-align:center;margin:0 .5px">16</span><span style="display:inline-block;width:15px;height:13px;background:#e6e6da;font-size:10px;line-height:13px;text-align:center;margin:0 .5px">16</span></div>
<div class="c" style="left:608px;top:602px;width:33px;height:26px;justify-content:center;padding:0 0px;font-size:12px;">36.7</div>
<div class="c" style="left:642px;top:602px;width:71px;height:26px;justify-content:flex-start;padding:0 5px;font-size:12px;">470<span style="font-size:10px;margin-left:2px">(初出走)</span></div>
<div class="c" style="left:714px;top:602px;width:100px;height:26px;justify-content:flex-start;padding:0 4px;font-size:12px;font-size:11px;word-spacing:2px"><a>戸田 博文</a></div>
<div class="c" style="left:815px;top:602px;width:30px;height:26px;justify-content:center;padding:0 0px;font-size:12px;">11</div>
<div class="ab" style="left:0;top:643px;font-size:12px;line-height:16px;font-weight:bold;color:#333">タイム</div>
<div class="ab" style="left:0;top:664px;width:117px;height:52px;background:#eceef1"></div>
<div class="hl" style="left:0;top:664px;width:846px"></div>
<div class="hl" style="left:0;top:690px;width:846px"></div>
<div class="hl" style="left:0;top:716px;width:846px"></div>
<div class="vl" style="left:0px;top:664px;height:53px"></div>
<div class="vl" style="left:117px;top:664px;height:53px"></div>
<div class="vl" style="left:845px;top:664px;height:53px"></div>
<div class="c" style="left:11px;top:665px;height:25px;font-size:11px;color:#333">ハロンタイム</div>
<div class="c" style="left:128px;top:665px;height:25px;font-size:12.8px;color:#333">12.7 - 11.5 - 12.4 - 12.6 - 12.7 - 11.5 - 11.7 - 11.6</div>
<div class="c" style="left:11px;top:691px;height:25px;font-size:11px;color:#333">上り</div>
<div class="c" style="left:128px;top:691px;height:25px;font-size:12.15px;color:#333">4F 47.5 - 3F 34.8</div>
<div class="ab" style="left:0;top:732px;font-size:12px;line-height:16px;font-weight:bold;color:#333"><span style="letter-spacing:-0.3px">コーナー通過順位</span></div>
<div class="ab" style="left:0;top:752px;width:117px;height:52px;background:#eceef1"></div>
<div class="hl" style="left:0;top:752px;width:846px"></div>
<div class="hl" style="left:0;top:778px;width:846px"></div>
<div class="hl" style="left:0;top:804px;width:846px"></div>
<div class="vl" style="left:0px;top:752px;height:53px"></div>
<div class="vl" style="left:117px;top:752px;height:53px"></div>
<div class="vl" style="left:845px;top:752px;height:53px"></div>
<div class="c" style="left:11px;top:753px;height:25px;font-size:11px;color:#333">3コーナー</div>
<div class="c" style="left:128px;top:753px;height:25px;font-size:12.2px;color:#333">(7,*8)13-4,3,9(2,12)10(1,5,15)(6,14,<span style="display:inline-block;background:#3b3ba8;color:#fff;font-weight:bold;font-size:13px;width:20px;height:22px;line-height:22px;text-align:center">16</span>)-11</div>
<div class="c" style="left:11px;top:779px;height:25px;font-size:11px;color:#333">4コーナー</div>
<div class="c" style="left:128px;top:779px;height:25px;font-size:12.25px;color:#333">8(7,13)-4(3,12)9(2,10,15)(1,5,<span style="display:inline-block;background:#3b3ba8;color:#fff;font-weight:bold;font-size:13px;width:20px;height:22px;line-height:22px;text-align:center">16</span>)-6,14-11</div>
<div class="ab" style="left:0;top:838px;font-size:14px;line-height:18px;font-weight:bold;color:#333">払戻金</div>
<div class="ab" style="left:0;top:864px;width:846px;height:1px;background:#ddd"></div>
<div class="ab" style="left:0;top:863px;width:108px;height:2px;background:#3aa03a"></div>
<div class="ab" style="left:0px;top:879px;width:282px;height:101px;background:#f7f7f7"></div>
<div class="ab" style="left:0px;top:879px;width:46px;height:101px;background:#ebebe0"></div>
<div class="ab" style="left:45px;top:879px;width:1px;height:101px;background:#dfdfd0"></div>
<div class="c" style="left:1px;top:880px;width:44px;height:24px;justify-content:center;font-size:11.5px;font-weight:bold;color:#333">単勝</div>
<div class="c" style="left:46px;top:880px;width:68px;height:24px;justify-content:center;font-size:13.5px">16</div>
<div class="c" style="left:115px;top:880px;width:94px;height:24px;justify-content:flex-end;padding-right:4px;font-size:13.5px">340<span style="font-size:9px;margin-left:1px;position:relative;top:1px">円</span></div>
<div class="c" style="left:210px;top:880px;width:71px;height:24px;justify-content:flex-end;padding-right:4px;font-size:13.5px">2<span style="font-size:9px;margin-left:1px;position:relative;top:1px">番人気</span></div>
<div class="hl" style="left:0px;top:904px;width:282px"></div>
<div class="c" style="left:1px;top:905px;width:44px;height:75px;justify-content:center;font-size:11.5px;font-weight:bold;color:#333">複勝</div>
<div class="c" style="left:46px;top:905px;width:68px;height:24px;justify-content:center;font-size:13.5px">16</div>
<div class="c" style="left:115px;top:905px;width:94px;height:24px;justify-content:flex-end;padding-right:4px;font-size:13.5px">180<span style="font-size:9px;margin-left:1px;position:relative;top:1px">円</span></div>
<div class="c" style="left:210px;top:905px;width:71px;height:24px;justify-content:flex-end;padding-right:4px;font-size:13.5px">2<span style="font-size:9px;margin-left:1px;position:relative;top:1px">番人気</span></div>
<div class="c" style="left:46px;top:930px;width:68px;height:24px;justify-content:center;font-size:13.5px">8</div>
<div class="c" style="left:115px;top:930px;width:94px;height:24px;justify-content:flex-end;padding-right:4px;font-size:13.5px">3,800<span style="font-size:9px;margin-left:1px;position:relative;top:1px">円</span></div>
<div class="c" style="left:210px;top:930px;width:71px;height:24px;justify-content:flex-end;padding-right:4px;font-size:13.5px">16<span style="font-size:9px;margin-left:1px;position:relative;top:1px">番人気</span></div>
<div class="ab" style="left:46px;top:929px;width:235px;height:1px;border-top:1px dashed #ccc"></div>
<div class="c" style="left:46px;top:955px;width:68px;height:25px;justify-content:center;font-size:13.5px">10</div>
<div class="c" style="left:115px;top:955px;width:94px;height:25px;justify-content:flex-end;padding-right:4px;font-size:13.5px">1,160<span style="font-size:9px;margin-left:1px;position:relative;top:1px">円</span></div>
<div class="c" style="left:210px;top:955px;width:71px;height:25px;justify-content:flex-end;padding-right:4px;font-size:13.5px">12<span style="font-size:9px;margin-left:1px;position:relative;top:1px">番人気</span></div>
<div class="ab" style="left:46px;top:954px;width:235px;height:1px;border-top:1px dashed #ccc"></div>
<div class="hl" style="left:0px;top:980px;width:282px"></div>
<div class="hl" style="left:0px;top:879px;width:282px"></div>
<div class="vl" style="left:0px;top:879px;height:102px"></div>
<div class="vl" style="left:114px;top:879px;height:102px"></div>
<div class="vl" style="left:209px;top:879px;height:102px"></div>
<div class="vl" style="left:281px;top:879px;height:102px"></div>
<div class="ab" style="left:282px;top:879px;width:282px;height:101px;background:#f7f7f7"></div>
<div class="ab" style="left:282px;top:879px;width:46px;height:101px;background:#ebebe0"></div>
<div class="ab" style="left:327px;top:879px;width:1px;height:101px;background:#dfdfd0"></div>
<div class="c" style="left:283px;top:880px;width:44px;height:24px;justify-content:center;font-size:11.5px;font-weight:bold;color:#333">枠連</div>
<div class="c" style="left:328px;top:880px;width:68px;height:24px;justify-content:center;font-size:13.5px">4-8</div>
<div class="c" style="left:397px;top:880px;width:94px;height:24px;justify-content:flex-end;padding-right:4px;font-size:13.5px">11,750<span style="font-size:9px;margin-left:1px;position:relative;top:1px">円</span></div>
<div class="c" style="left:492px;top:880px;width:71px;height:24px;justify-content:flex-end;padding-right:4px;font-size:13.5px">24<span style="font-size:9px;margin-left:1px;position:relative;top:1px">番人気</span></div>
<div class="hl" style="left:282px;top:904px;width:282px"></div>
<div class="c" style="left:283px;top:905px;width:44px;height:75px;justify-content:center;font-size:11.5px;font-weight:bold;color:#333">ワイド</div>
<div class="c" style="left:328px;top:905px;width:68px;height:24px;justify-content:center;font-size:13.5px">8-16</div>
<div class="c" style="left:397px;top:905px;width:94px;height:24px;justify-content:flex-end;padding-right:4px;font-size:13.5px">9,470<span style="font-size:9px;margin-left:1px;position:relative;top:1px">円</span></div>
<div class="c" style="left:492px;top:905px;width:71px;height:24px;justify-content:flex-end;padding-right:4px;font-size:13.5px">58<span style="font-size:9px;margin-left:1px;position:relative;top:1px">番人気</span></div>
<div class="c" style="left:328px;top:930px;width:68px;height:24px;justify-content:center;font-size:13.5px">10-16</div>
<div class="c" style="left:397px;top:930px;width:94px;height:24px;justify-content:flex-end;padding-right:4px;font-size:13.5px">1,830<span style="font-size:9px;margin-left:1px;position:relative;top:1px">円</span></div>
<div class="c" style="left:492px;top:930px;width:71px;height:24px;justify-content:flex-end;padding-right:4px;font-size:13.5px">19<span style="font-size:9px;margin-left:1px;position:relative;top:1px">番人気</span></div>
<div class="ab" style="left:328px;top:929px;width:235px;height:1px;border-top:1px dashed #ccc"></div>
<div class="c" style="left:328px;top:955px;width:68px;height:25px;justify-content:center;font-size:13.5px">8-10</div>
<div class="c" style="left:397px;top:955px;width:94px;height:25px;justify-content:flex-end;padding-right:4px;font-size:13.5px">42,580<span style="font-size:9px;margin-left:1px;position:relative;top:1px">円</span></div>
<div class="c" style="left:492px;top:955px;width:71px;height:25px;justify-content:flex-end;padding-right:4px;font-size:13.5px">106<span style="font-size:9px;margin-left:1px;position:relative;top:1px">番人気</span></div>
<div class="ab" style="left:328px;top:954px;width:235px;height:1px;border-top:1px dashed #ccc"></div>
<div class="hl" style="left:282px;top:980px;width:282px"></div>
<div class="hl" style="left:282px;top:879px;width:282px"></div>
<div class="vl" style="left:282px;top:879px;height:102px"></div>
<div class="vl" style="left:396px;top:879px;height:102px"></div>
<div class="vl" style="left:491px;top:879px;height:102px"></div>
<div class="vl" style="left:563px;top:879px;height:102px"></div>
<div class="ab" style="left:564px;top:879px;width:282px;height:101px;background:#f7f7f7"></div>
<div class="ab" style="left:564px;top:879px;width:46px;height:101px;background:#ebebe0"></div>
<div class="ab" style="left:609px;top:879px;width:1px;height:101px;background:#dfdfd0"></div>
<div class="c" style="left:565px;top:880px;width:44px;height:24px;justify-content:center;font-size:11.5px;font-weight:bold;color:#333">馬連</div>
<div class="c" style="left:610px;top:880px;width:68px;height:24px;justify-content:center;font-size:13.5px">8-16</div>
<div class="c" style="left:679px;top:880px;width:94px;height:24px;justify-content:flex-end;padding-right:4px;font-size:13.5px">36,730<span style="font-size:9px;margin-left:1px;position:relative;top:1px">円</span></div>
<div class="c" style="left:774px;top:880px;width:71px;height:24px;justify-content:flex-end;padding-right:4px;font-size:13.5px">54<span style="font-size:9px;margin-left:1px;position:relative;top:1px">番人気</span></div>
<div class="hl" style="left:564px;top:904px;width:282px"></div>
<div class="c" style="left:565px;top:905px;width:44px;height:24px;justify-content:center;font-size:11.5px;font-weight:bold;color:#333">馬単</div>
<div class="c" style="left:610px;top:905px;width:68px;height:24px;justify-content:center;font-size:13.5px">16-8</div>
<div class="c" style="left:679px;top:905px;width:94px;height:24px;justify-content:flex-end;padding-right:4px;font-size:13.5px">42,350<span style="font-size:9px;margin-left:1px;position:relative;top:1px">円</span></div>
<div class="c" style="left:774px;top:905px;width:71px;height:24px;justify-content:flex-end;padding-right:4px;font-size:13.5px">79<span style="font-size:9px;margin-left:1px;position:relative;top:1px">番人気</span></div>
<div class="hl" style="left:564px;top:929px;width:282px"></div>
<div class="c" style="left:565px;top:930px;width:44px;height:24px;justify-content:center;font-size:11.5px;font-weight:bold;color:#333">3連複</div>
<div class="c" style="left:610px;top:930px;width:68px;height:24px;justify-content:center;font-size:13.5px">8-10-16</div>
<div class="c" style="left:679px;top:930px;width:94px;height:24px;justify-content:flex-end;padding-right:4px;font-size:13.5px">305,920<span style="font-size:9px;margin-left:1px;position:relative;top:1px">円</span></div>
<div class="c" style="left:774px;top:930px;width:71px;height:24px;justify-content:flex-end;padding-right:4px;font-size:13.5px">274<span style="font-size:9px;margin-left:1px;position:relative;top:1px">番人気</span></div>
<div class="hl" style="left:564px;top:954px;width:282px"></div>
<div class="c" style="left:565px;top:955px;width:44px;height:25px;justify-content:center;font-size:11.5px;font-weight:bold;color:#333">3連単</div>
<div class="c" style="left:610px;top:955px;width:68px;height:25px;justify-content:center;font-size:13.5px">16-8-10</div>
<div class="c" style="left:679px;top:955px;width:94px;height:25px;justify-content:flex-end;padding-right:4px;font-size:13.5px">938,140<span style="font-size:9px;margin-left:1px;position:relative;top:1px">円</span></div>
<div class="c" style="left:774px;top:955px;width:71px;height:25px;justify-content:flex-end;padding-right:4px;font-size:13.5px">1149<span style="font-size:9px;margin-left:1px;position:relative;top:1px">番人気</span></div>
<div class="hl" style="left:564px;top:980px;width:282px"></div>
<div class="hl" style="left:564px;top:879px;width:282px"></div>
<div class="vl" style="left:564px;top:879px;height:102px"></div>
<div class="vl" style="left:678px;top:879px;height:102px"></div>
<div class="vl" style="left:773px;top:879px;height:102px"></div>
<div class="vl" style="left:845px;top:879px;height:102px"></div>
</body></html>
